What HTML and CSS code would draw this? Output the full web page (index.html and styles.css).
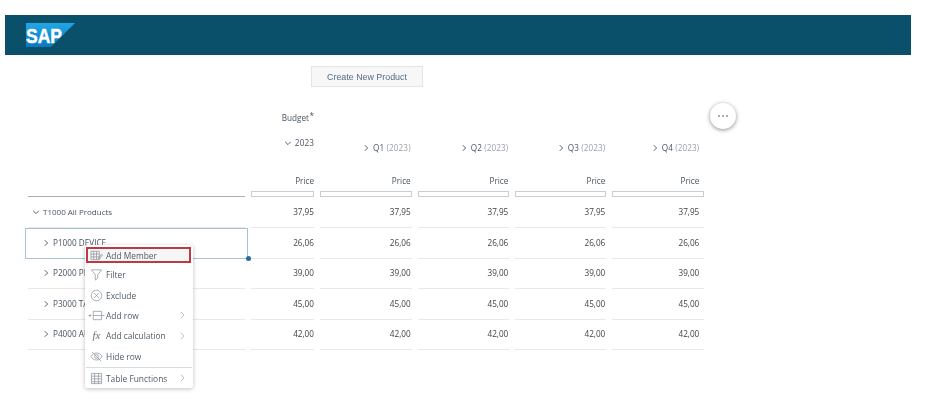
FILE: index.html
```html
<!DOCTYPE html>
<html lang="en">
<head>
<meta charset="utf-8">
<title>Products</title>
<link rel="stylesheet" href="styles.css">
</head>
<body>
<div class="page">
  <header class="shell">
    <svg class="logo" viewBox="0 0 49 24" aria-label="SAP">
      <defs><linearGradient id="sapg" x1="0" y1="0" x2="0" y2="1"><stop offset="0" stop-color="#1fa8e6"/><stop offset="1" stop-color="#0a77c0"/></linearGradient></defs>
      <polygon points="0,0 49,0 25,24 0,24" fill="url(#sapg)"/>
      <text x="0" y="20" class="logo-text" textLength="36" lengthAdjust="spacingAndGlyphs">SAP</text>
    </svg>
  </header>
  <div class="toolbar"><button class="create">Create New Product</button></div>
  <div class="table">
    <div class="row head-a"><div></div><div class="budget">Budget<span class="ast">*</span></div></div>
    <div class="row head-b">
      <div></div>
      <div class="period year"><svg class="chev" viewBox="0 0 10 10"><path d="M1.5 3.5 5 7l3.5-3.5"/></svg>2023</div>
      <div class="period"><svg class="chev" viewBox="0 0 10 10"><path d="M3.5 1.5 7 5l-3.5 3.5"/></svg><b>Q1</b> <i>(2023)</i></div>
      <div class="period"><svg class="chev" viewBox="0 0 10 10"><path d="M3.5 1.5 7 5l-3.5 3.5"/></svg><b>Q2</b> <i>(2023)</i></div>
      <div class="period"><svg class="chev" viewBox="0 0 10 10"><path d="M3.5 1.5 7 5l-3.5 3.5"/></svg><b>Q3</b> <i>(2023)</i></div>
      <div class="period"><svg class="chev" viewBox="0 0 10 10"><path d="M3.5 1.5 7 5l-3.5 3.5"/></svg><b>Q4</b> <i>(2023)</i></div>
    </div>
    <div class="row head-c">
      <div class="corner"></div>
      <div class="measure">Price</div><div class="measure">Price</div><div class="measure">Price</div><div class="measure">Price</div><div class="measure">Price</div>
    </div>
    <div class="row body top">
      <div class="label lvl0"><svg class="chev" viewBox="0 0 10 10"><path d="M1.5 3.5 5 7l3.5-3.5"/></svg>T1000 All Products</div>
      <div class="val">37,95</div><div class="val">37,95</div><div class="val">37,95</div><div class="val">37,95</div><div class="val">37,95</div>
    </div>
    <div class="row body">
      <div class="label lvl1 selected"><svg class="chev" viewBox="0 0 10 10"><path d="M3.5 1.5 7 5l-3.5 3.5"/></svg>P1000 DEVICE<span class="handle"></span></div>
      <div class="val">26,06</div><div class="val">26,06</div><div class="val">26,06</div><div class="val">26,06</div><div class="val">26,06</div>
    </div>
    <div class="row body">
      <div class="label lvl1"><svg class="chev" viewBox="0 0 10 10"><path d="M3.5 1.5 7 5l-3.5 3.5"/></svg>P2000 PHONE</div>
      <div class="val">39,00</div><div class="val">39,00</div><div class="val">39,00</div><div class="val">39,00</div><div class="val">39,00</div>
    </div>
    <div class="row body">
      <div class="label lvl1"><svg class="chev" viewBox="0 0 10 10"><path d="M3.5 1.5 7 5l-3.5 3.5"/></svg>P3000 TABLET</div>
      <div class="val">45,00</div><div class="val">45,00</div><div class="val">45,00</div><div class="val">45,00</div><div class="val">45,00</div>
    </div>
    <div class="row body">
      <div class="label lvl1"><svg class="chev" viewBox="0 0 10 10"><path d="M3.5 1.5 7 5l-3.5 3.5"/></svg>P4000 AUDIO</div>
      <div class="val">42,00</div><div class="val">42,00</div><div class="val">42,00</div><div class="val">42,00</div><div class="val">42,00</div>
    </div>
  </div>
</div>
<button class="more" aria-label="More"><span></span><span></span><span></span></button>
<nav class="menu">
  <div class="item active">
    <svg class="ic" viewBox="0 0 14 14"><path d="M1 2.5h9v9H1zM1 5.5h9M1 8.5h9M4 2.5v9M7 2.5v9M9.5 9.5l3-4 1 .8-3 4-1.5.5z"/></svg>
    <span>Add Member</span>
  </div>
  <div class="item">
    <svg class="ic" viewBox="0 0 14 14"><path d="M1.5 2h11L8.3 7.2V11l-2.600 2V7.2z"/></svg>
    <span>Filter</span>
  </div>
  <div class="item">
    <svg class="ic" viewBox="0 0 14 14"><circle cx="7" cy="7" r="5.7"/><path d="M4.5 4.5l5 5M9.5 4.5l-5 5"/></svg>
    <span>Exclude</span>
  </div>
  <div class="item sub">
    <svg class="ic wide" viewBox="0 0 18 14"><path d="M.5 7h3M2 5.5v3M5.5 2.5h9v9h-9zM5.5 7h9M14.5 7h3"/></svg>
    <span>Add row</span>
    <svg class="arrow" viewBox="0 0 6 10"><path d="M1 1l4 4-4 4"/></svg>
  </div>
  <div class="item sub">
    <span class="ic fx">fx</span>
    <span>Add calculation</span>
    <svg class="arrow" viewBox="0 0 6 10"><path d="M1 1l4 4-4 4"/></svg>
  </div>
  <div class="item">
    <svg class="ic" viewBox="0 0 14 14"><path d="M1 7c1.5-2.5 3.5-3.800 6-3.800S11.500 4.500 13 7c-1.500 2.500-3.500 3.800-6 3.800S2.500 9.500 1 7zM2 2l10 10"/><circle cx="7" cy="7" r="2"/></svg>
    <span>Hide row</span>
  </div>
  <div class="item sub last">
    <svg class="ic" viewBox="0 0 14 14"><path d="M1.5 1.5h11v11h-11zM1.5 4.5h11M1.5 7.5h11M1.5 10.5h11M5 1.5v11M9 1.5v11"/></svg>
    <span>Table Functions</span>
    <svg class="arrow" viewBox="0 0 6 10"><path d="M1 1l4 4-4 4"/></svg>
  </div>
</nav>
</body>
</html>
```

FILE: styles.css
```css
* { box-sizing: border-box; }
html, body { margin: 0; height: 100%; background: #fff; }
body {
  position: relative;
  width: 927px;
  height: 412px;
  overflow: hidden;
  font-family: "Open Sans", "Noto Sans", sans-serif;
  font-size: 8.2px;
  color: #4a5560;
}
.page { padding: 15px 0 0 5px; filter: blur(0.3px); }
.shell {
  width: 906px;
  height: 40px;
  background: #0b506b;
  padding: 8px 0 0 21px;
}
.logo { display: block; width: 49px; height: 24px; }
.logo-text { font: 700 21px "Liberation Sans", sans-serif; fill: #fff; stroke: #fff; stroke-width: .5; }

.toolbar { padding: 11px 0 0 306px; }
.create {
  display: block;
  width: 112px;
  height: 21px;
  padding: 0;
  background: #f7f7f7;
  border: 1px solid #e2e5e8;
  font: 8.9px "Liberation Sans", sans-serif;
  color: #556b82;
}

.table { margin: 21px 0 0 23px; width: 677px; }
.row {
  display: grid;
  grid-template-columns: 217px 63px 91.67px 91.67px 91px 92px;
  column-gap: 6px;
}
.row > :nth-child(n+3) { padding-right: 1px; }
.row > :nth-child(6) { padding-right: 5px; }
.head-a { height: 20px; }
.budget { text-align: right; line-height: 20px; }
.ast { position: relative; top: -2px; margin-left: .5px; }
.head-b { height: 36px; }
.period { text-align: right; line-height: 12px; padding-top: 14px; color: #4a5560; white-space: nowrap; letter-spacing: .1px; }
.period.year { padding-top: 9px; }
.period b { font-weight: 400; }
.period i { font-style: normal; color: #9aa3ab; }
.chev {
  display: inline-block;
  width: 8px;
  height: 8px;
  margin-right: 3px;
  vertical-align: -1px;
  fill: none;
  stroke: #3c4d60;
  stroke-width: 1.1;
}
.head-c { height: 33px; }
.measure {
  text-align: right;
  line-height: 12px;
  padding-top: 11px;
  height: 33px;
  position: relative;
}
.measure::after {
  content: "";
  position: absolute;
  left: 0;
  right: 0;
  bottom: 0;
  height: 4px;
  border: 1px solid #c9cdd0;
}
.corner { border-bottom: 1px solid #a8b0b6; }
.body { height: 30.5px; }
.val, .label {
  line-height: 30px;
  border-bottom: 1px solid #e8e8e8;
  white-space: nowrap;
}
.val { text-align: right; color: #3d444b; }
.label { position: relative; color: #4a5560; }
.lvl0 { padding-left: 4px; font-size: 8px; }
.lvl1 { padding-left: 14px; }
.selected::before {
  content: "";
  position: absolute;
  left: -3px;
  right: -3px;
  top: 0;
  bottom: -1px;
  border: 1px solid #a9c3cf;
}
.handle {
  position: absolute;
  right: -6px;
  bottom: -3px;
  width: 5px;
  height: 5px;
  border-radius: 50%;
  background: #2a6ca0;
}

.more {
  position: absolute;
  left: 710px;
  top: 103px;
  width: 26px;
  height: 26px;
  padding: 0;
  display: flex;
  align-items: center;
  justify-content: center;
  gap: 1.5px;
  background: #fff;
  border: 0;
  border-radius: 50%;
  box-shadow: 0 1px 4px rgba(0, 0, 0, .45);
}
.more span { width: 2.5px; height: 2.5px; border-radius: 50%; background: #8a949d; }

.menu {
  position: absolute;
  left: 85px;
  top: 245px;
  width: 108px;
  height: 143px;
  padding: 2px 1px 0;
  background: #fff;
  border-radius: 2px;
  box-shadow: 0 1px 4px rgba(0, 0, 0, .25);
  font-size: 8.4px;
  color: #505b65;
}
.item {
  display: flex;
  align-items: center;
  height: 20.4px;
  padding-left: 4px;
  position: relative;
}
.item.active {
  width: 105px;
  height: 16px;
  margin-bottom: 1.5px;
  border: 2px solid #bc3a44;
  padding-left: 2px;
  background: #f6f6f6;
}
.item.last { margin-top: 1px; border-top: 1px solid #dcdcdc; height: 21px; }
.ic {
  width: 13px;
  height: 13px;
  margin-right: 3px;
  flex: none;
  fill: none;
  stroke: #8d959c;
  stroke-width: .8;
}
.ic.wide { width: 17px; margin-left: -2px; margin-right: 1px; }
.fx { font: italic 11px/13px "Liberation Serif", serif; color: #6a737b; text-align: center; }
.arrow {
  position: absolute;
  right: 7px;
  top: 6px;
  width: 5px;
  height: 8px;
  fill: none;
  stroke: #a8afb5;
  stroke-width: 1;
}
```
